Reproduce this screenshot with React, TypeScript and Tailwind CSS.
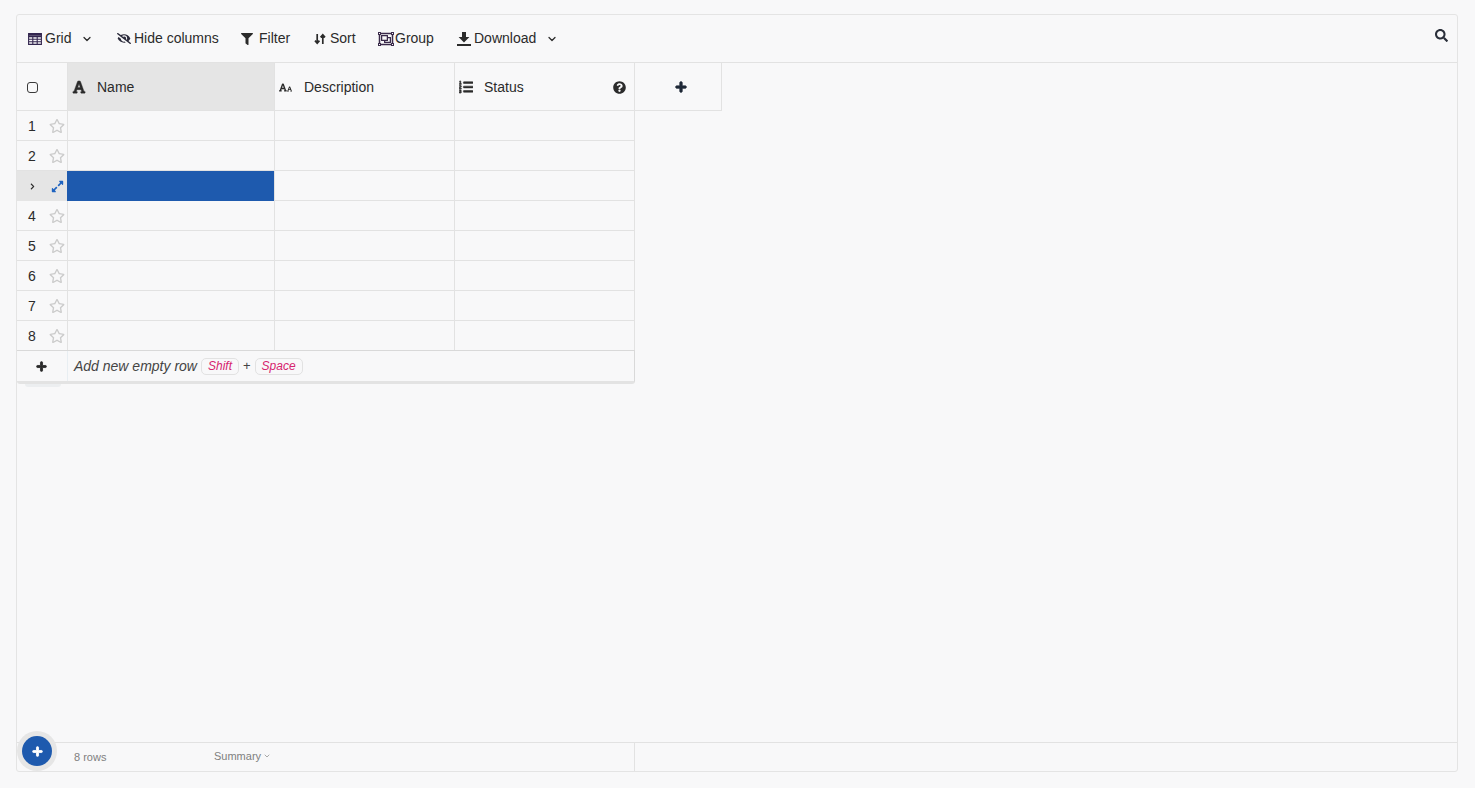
import {
  FaChevronRight,
  FaExpandAlt,
  FaEyeSlash,
  FaFilter,
  FaFont,
  FaListOl,
  FaPlus,
  FaQuestionCircle,
  FaRegObjectGroup,
  FaRegStar,
  FaSearch,
} from "react-icons/fa";
import { LuChevronDown } from "react-icons/lu";

const rows = [1, 2, 3, 4, 5, 6, 7, 8];

const ToolbarItem = ({ icon, label, className }: { icon: React.ReactNode; label: string; className: string }) => (
  <div className={`flex items-center ${className}`}>
    {icon}
    <span>{label}</span>
  </div>
);

const Row = ({ n }: { n: number }) => {
  const active = n === 3;
  return (
    <div className="flex h-[30px] border-b border-[#e2e2e2]">
      <div className={`flex w-[51px] shrink-0 items-center border-r border-[#e2e2e2] pt-[1px] ${active ? "-mb-px border-r-0 bg-[#e5e5e5]" : ""}`}>
        <div className="w-[30px] text-center text-[14px] leading-none text-[#2b2b2b]">
          {active ? <FaChevronRight className="mx-auto h-[7px] w-[7px]" /> : n}
        </div>
        {active ? (
          <FaExpandAlt className="ml-[4px] h-[13px] w-[13px] text-[#1e63c0]" />
        ) : (
          <FaRegStar className="ml-[2px] h-[16px] w-[16px] text-[#cbcbcb]" />
        )}
      </div>
      <div className={`-ml-px w-[208px] shrink-0 border-r border-[#e2e2e2] ${active ? "-mb-px bg-[#1e5aae]" : ""}`} />
      <div className="w-[180px] shrink-0 border-r border-[#e2e2e2]" />
      <div className="w-[180px] shrink-0 border-r border-[#e2e2e2]" />
    </div>
  );
};

export default function App() {
  return (
    <div className="flex h-screen flex-col bg-[#f8f8f9] pt-[14px] pb-[16px] pl-[16px] pr-[17px] font-['Liberation_Sans',Arial,sans-serif] text-[#2b2b2b]">
      <div className="relative flex min-h-0 flex-1 flex-col rounded-[3px] border border-[#e4e4e4]">
        <div className="flex h-[48px] shrink-0 items-center border-b border-[#e2e2e2] text-[14px]">
          <ToolbarItem
            className="ml-[11px] w-[89px]"
            label="Grid"
            icon={
              <svg viewBox="0 0 14 12" className="mr-[3px] h-[12px] w-[14px]" fill="none" stroke="#33264f" strokeWidth="1.1">
                <path d="M.6.6h12.8v10.8H.6zM.6 3.6h12.8M.6 6.2h12.8M.6 8.8h12.8M4.8 3.6v7.8M9.2 3.6v7.8" />
                <path d="M.6 1.8h12.8" strokeWidth="2" />
              </svg>
            }
          />
          <LuChevronDown className="-ml-[36px] mr-[24px] h-[12px] w-[12px]" strokeWidth={2.5} />
          <ToolbarItem
            className="w-[124px]"
            label="Hide columns"
            icon={<FaEyeSlash className="mr-[3px] h-[13px] w-[14px] text-[#2a2a3a]" />}
          />
          <ToolbarItem
            className="w-[73px]"
            label="Filter"
            icon={<FaFilter className="mr-[6px] h-[12px] w-[12px]" />}
          />
          <ToolbarItem
            className="w-[64px]"
            label="Sort"
            icon={
              <svg viewBox="0 0 12 12" className="mr-[4px] h-[12px] w-[12px]" fill="none" stroke="#2b2b2b" strokeWidth="1.7">
                <path d="M3.2 1v9M1 7.6l2.2 2.6 2.2-2.6M8.8 11V2M6.6 4.4l2.2-2.6 2.2 2.6" />
              </svg>
            }
          />
          <ToolbarItem
            className="w-[79px]"
            label="Group"
            icon={<FaRegObjectGroup className="-ml-px h-[16px] w-[18px] text-[#3a2a4a]" />}
          />
          <ToolbarItem
            className="w-[80px]"
            label="Download"
            icon={
              <svg viewBox="0 0 14 14" className="mr-[3px] h-[14px] w-[14px]" fill="#2b2b2b">
                <path d="M5 0h4v5h3.4L7 10.4 1.6 5H5zM0 12h14v2H0z" />
              </svg>
            }
          />
          <LuChevronDown className="ml-[9px] h-[12px] w-[12px]" strokeWidth={2.5} />
          <FaSearch className="mb-[6px] ml-auto mr-[9px] h-[13px] w-[13px] text-[#2a2f3a]" />
        </div>

        <div className="flex-1">
          <div className="flex h-[48px]">
            <div className="flex w-[51px] shrink-0 items-center border-r border-b border-[#e2e2e2] pl-[10px] pt-[1px]">
              <div className="h-[11px] w-[11px] rounded-[3px] border border-[#3a3a3a]" />
            </div>
            <div className="flex w-[207px] shrink-0 items-center border-r border-b border-[#e2e2e2] bg-[#e5e5e5] pl-[5px] pt-[1px] text-[14px]">
              <FaFont className="-ml-px mr-[11px] h-[14px] w-[14px]" stroke="currentColor" strokeWidth={15} />
              Name
            </div>
            <div className="flex w-[180px] shrink-0 items-center border-r border-b border-[#e2e2e2] pl-[4px] pt-[1px] text-[14px]">
              <span className="mr-[12px] flex w-[13px] items-end">
                <FaFont className="h-[9px] w-[9px]" />
                <FaFont className="h-[6px] w-[6px]" />
              </span>
              Description
            </div>
            <div className="flex w-[180px] shrink-0 items-center border-r border-b border-[#e2e2e2] pl-[4px] pt-[1px] text-[14px]">
              <FaListOl className="mr-[11px] h-[14px] w-[14px]" stroke="currentColor" strokeWidth={20} />
              Status
              <FaQuestionCircle className="ml-auto mr-[8px] h-[13px] w-[13px]" />
            </div>
            <div className="flex w-[87px] shrink-0 items-center justify-center border-r border-b border-[#e2e2e2] pl-[6px]">
              <FaPlus className="h-[12px] w-[12px] text-[#1f2937]" stroke="currentColor" strokeWidth={40} />
            </div>
          </div>

          <div className="w-[618px]">
            {rows.map((n) => (
              <Row key={n} n={n} />
            ))}
            <div className="-mt-px flex h-[34px] rounded-b-[3px] border-t border-r border-b-[3px] border-[#d9d9d9] border-b-[#e3e3e3]">
              <div className="relative flex h-[30px] w-[50px] shrink-0 items-center justify-center pr-[1px]">
                <FaPlus className="h-[11px] w-[11px]" stroke="currentColor" strokeWidth={40} />
                <div className="absolute top-[33px] left-[8px] h-[3px] w-[36px] rounded-b-full bg-[#eceef0]" />
              </div>
              <div className="flex h-[30px] flex-1 items-center border-l border-[#e8eef2] pl-[6px] text-[14px] italic text-[#444]">
                Add new empty row
                <span className="ml-[4px] rounded-[5px] border border-[#e2e2e2] px-[6px] text-[12px] leading-[15px] text-[#d6246e]">Shift</span>
                <span className="mx-[4px] text-[13px] not-italic">+</span>
                <span className="rounded-[5px] border border-[#e2e2e2] px-[6px] text-[12px] leading-[15px] text-[#d6246e]">Space</span>
              </div>
            </div>
          </div>
        </div>

        <div className="flex h-[29px] shrink-0 border-t border-[#e2e2e2] text-[11px] text-[#808080]">
          <div className="flex w-[618px] items-center border-r border-[#e2e2e2] pl-[57px]">
            <span className="w-[140px] pt-[1px]">8 rows</span>
            <span className="-mt-[2px] flex items-center">
              Summary
              <LuChevronDown className="ml-[2px] h-[8px] w-[8px]" />
            </span>
          </div>
        </div>

        <div className="absolute bottom-[5px] left-[5px] flex h-[30px] w-[30px] items-center justify-center rounded-full bg-[#1e5aae] ring-[5px] ring-[#e6e6e6]">
          <FaPlus className="h-[11px] w-[11px] text-white" stroke="currentColor" strokeWidth={40} />
        </div>
      </div>
    </div>
  );
}
